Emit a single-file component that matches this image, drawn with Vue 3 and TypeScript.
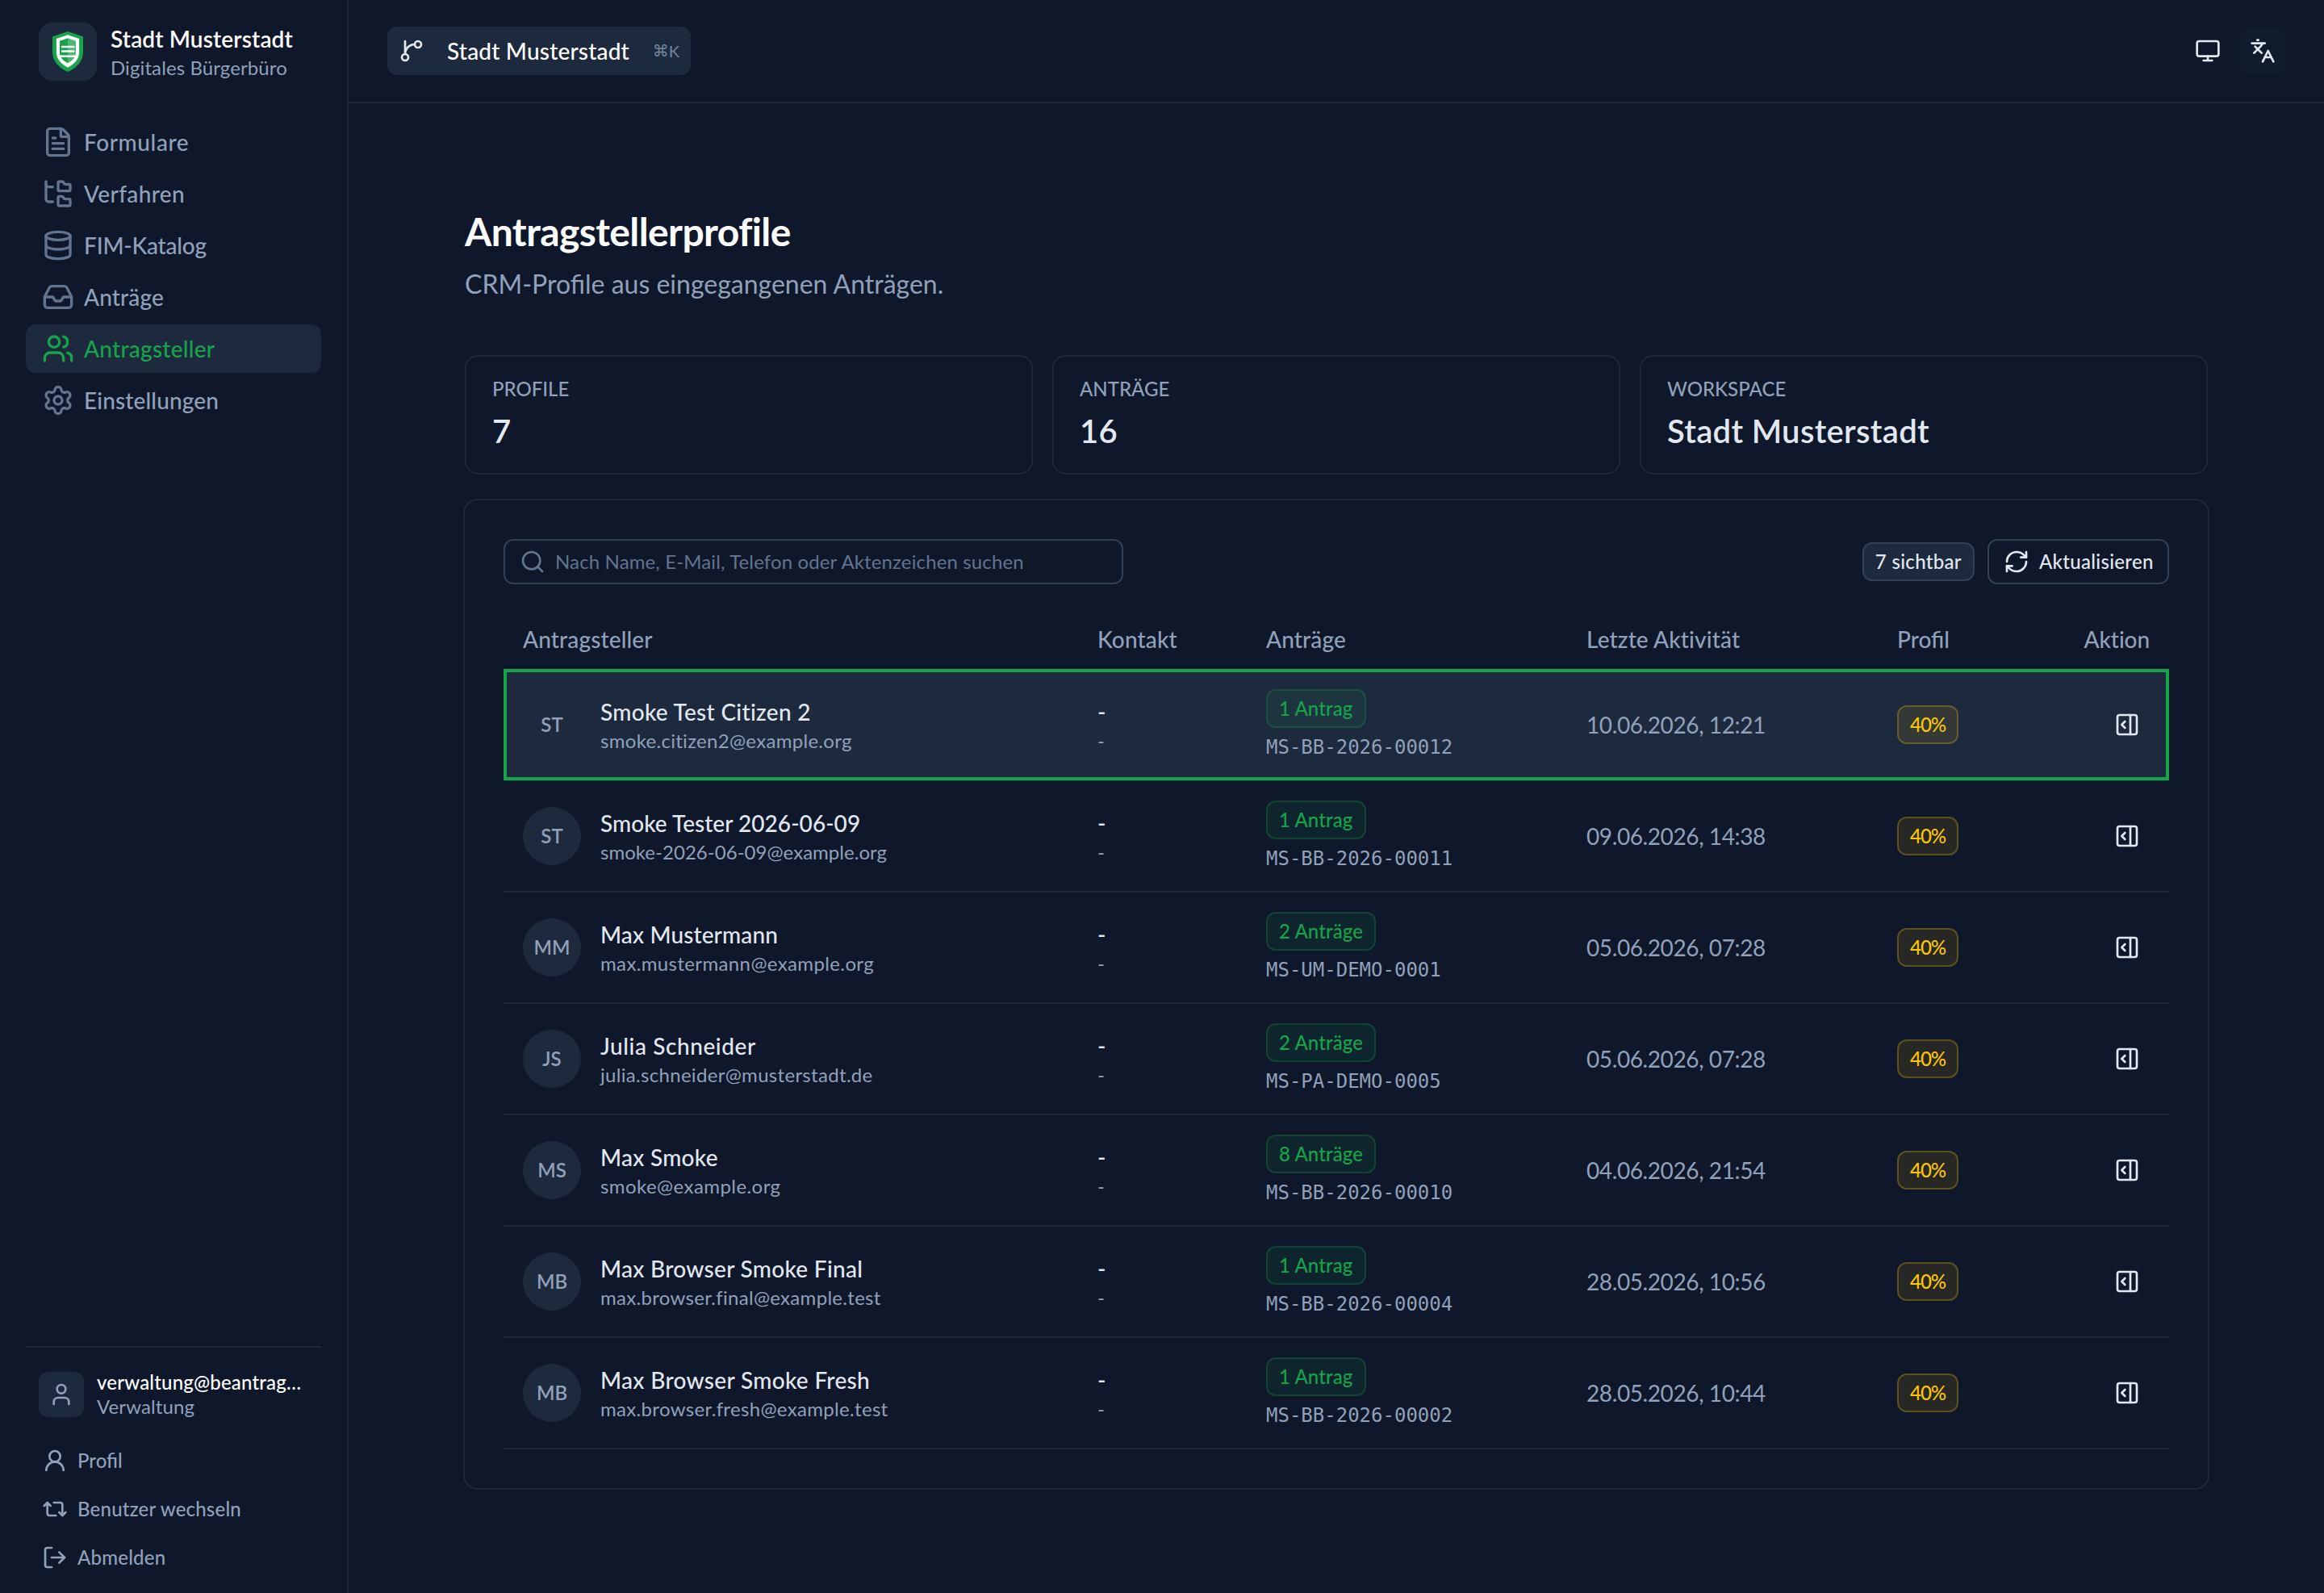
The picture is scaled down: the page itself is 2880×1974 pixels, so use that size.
<script setup lang="ts">
interface NavItem {
  label: string
  icon: string
  tracking: number
  active?: boolean
}

interface Applicant {
  initials: string
  name: string
  nameTracking: number
  email: string
  emailTracking: number
  requests: string
  reference: string
  lastActivity: string
}

/* Stroke icons on a 24 × 24 grid */
const icons: Record<string, string> = {
  file: '<path d="M6 22a2 2 0 0 1-2-2V4a2 2 0 0 1 2-2h8a2.4 2.4 0 0 1 1.704.706l3.588 3.588A2.4 2.4 0 0 1 20 8v12a2 2 0 0 1-2 2z"/><path d="M14 2v5a1 1 0 0 0 1 1h5"/><path d="M10 9H8"/><path d="M16 13H8"/><path d="M16 17H8"/>',
  folders:
    '<path d="M20 10a1 1 0 0 0 1-1V6a1 1 0 0 0-1-1h-2.5a1 1 0 0 1-.8-.4l-.9-1.2A1 1 0 0 0 15 3h-2a1 1 0 0 0-1 1v5a1 1 0 0 0 1 1Z"/><path d="M20 21a1 1 0 0 0 1-1v-3a1 1 0 0 0-1-1h-2.9a1 1 0 0 1-.88-.55l-.42-.85a1 1 0 0 0-.92-.6H13a1 1 0 0 0-1 1v5a1 1 0 0 0 1 1Z"/><path d="M3 5a2 2 0 0 0 2 2h3"/><path d="M3 3v13a2 2 0 0 0 2 2h3"/>',
  database:
    '<ellipse cx="12" cy="5" rx="9" ry="3"/><path d="M3 5V19A9 3 0 0 0 21 19V5"/><path d="M3 12A9 3 0 0 0 21 12"/>',
  inbox:
    '<path d="M22 12h-6l-2 3h-4l-2-3H2"/><path d="M5.45 5.11 2 12v6a2 2 0 0 0 2 2h16a2 2 0 0 0 2-2v-6l-3.45-6.89A2 2 0 0 0 16.76 4H7.24a2 2 0 0 0-1.79 1.11z"/>',
  users:
    '<path d="M16 21v-2a4 4 0 0 0-4-4H6a4 4 0 0 0-4 4v2"/><path d="M16 3.128a4 4 0 0 1 0 7.744"/><path d="M22 21v-2a4 4 0 0 0-3-3.87"/><circle cx="9" cy="7" r="4"/>',
  settings:
    '<path d="M9.671 4.136a2.34 2.34 0 0 1 4.659 0 2.34 2.34 0 0 0 3.319 1.915 2.34 2.34 0 0 1 2.33 4.033 2.34 2.34 0 0 0 0 3.831 2.34 2.34 0 0 1-2.33 4.033 2.34 2.34 0 0 0-3.319 1.915 2.34 2.34 0 0 1-4.659 0 2.34 2.34 0 0 0-3.32-1.915 2.34 2.34 0 0 1-2.33-4.033 2.34 2.34 0 0 0 0-3.831A2.34 2.34 0 0 1 6.35 6.051a2.34 2.34 0 0 0 3.319-1.915"/><circle cx="12" cy="12" r="3"/>',
  user: '<path d="M19 21v-2a4 4 0 0 0-4-4H9a4 4 0 0 0-4 4v2"/><circle cx="12" cy="7" r="4"/>',
  userRound: '<circle cx="12" cy="8" r="5"/><path d="M20 21a8 8 0 0 0-16 0"/>',
  repeat:
    '<path d="m2 9 3-3 3 3"/><path d="M13 18H7a2 2 0 0 1-2-2V6"/><path d="m22 15-3 3-3-3"/><path d="M11 6h6a2 2 0 0 1 2 2v10"/>',
  logout:
    '<path d="m16 17 5-5-5-5"/><path d="M21 12H9"/><path d="M9 21H5a2 2 0 0 1-2-2V5a2 2 0 0 1 2-2h4"/>',
  branch:
    '<path d="M15 6a9 9 0 0 0-9 9V3"/><circle cx="18" cy="6" r="3"/><circle cx="6" cy="18" r="3"/>',
  monitor: '<rect width="20" height="14" x="2" y="3" rx="2"/><path d="M8 21h8"/><path d="M12 17v4"/>',
  languages:
    '<path d="m5 8 6 6"/><path d="m4 14 6-6 2-3"/><path d="M2 5h12"/><path d="M7 2h1"/><path d="m22 22-5-10-5 10"/><path d="M14 18h6"/>',
  search: '<path d="m21 21-4.34-4.34"/><circle cx="11" cy="11" r="8"/>',
  refresh:
    '<path d="M3 12a9 9 0 0 1 9-9 9.75 9.75 0 0 1 6.74 2.74L21 8"/><path d="M21 3v5h-5"/><path d="M21 12a9 9 0 0 1-9 9 9.75 9.75 0 0 1-6.74-2.74L3 16"/><path d="M8 16H3v5"/>',
  panelOpen:
    '<rect width="18" height="18" x="3" y="3" rx="2"/><path d="M15 3v18"/><path d="m10 15-3-3 3-3"/>',
}

const navItems: NavItem[] = [
  { label: 'Formulare', icon: 'file', tracking: 0.6 },
  { label: 'Verfahren', icon: 'folders', tracking: 0.37 },
  { label: 'FIM-Katalog', icon: 'database', tracking: -0.2 },
  { label: 'Anträge', icon: 'inbox', tracking: 0.16 },
  { label: 'Antragsteller', icon: 'users', tracking: 0.27, active: true },
  { label: 'Einstellungen', icon: 'settings', tracking: 0.15 },
]

const accountLinks: NavItem[] = [
  { label: 'Profil', icon: 'userRound', tracking: 0 },
  { label: 'Benutzer wechseln', icon: 'repeat', tracking: 0.2 },
  { label: 'Abmelden', icon: 'logout', tracking: 0.2 },
]

const stats = [
  { label: 'PROFILE', value: '7' },
  { label: 'ANTRÄGE', value: '16' },
  { label: 'WORKSPACE', value: 'Stadt Musterstadt' },
]

const applicants: Applicant[] = [
  { initials: 'ST', name: 'Smoke Test Citizen 2', nameTracking: 0.3, email: 'smoke.citizen2@example.org', emailTracking: 0.3, requests: '1 Antrag', reference: 'MS-BB-2026-00012', lastActivity: '10.06.2026, 12:21' },
  { initials: 'ST', name: 'Smoke Tester 2026-06-09', nameTracking: 0.04, email: 'smoke-2026-06-09@example.org', emailTracking: 0.03, requests: '1 Antrag', reference: 'MS-BB-2026-00011', lastActivity: '09.06.2026, 14:38' },
  { initials: 'MM', name: 'Max Mustermann', nameTracking: 0.13, email: 'max.mustermann@example.org', emailTracking: 0.37, requests: '2 Anträge', reference: 'MS-UM-DEMO-0001', lastActivity: '05.06.2026, 07:28' },
  { initials: 'JS', name: 'Julia Schneider', nameTracking: 0.58, email: 'julia.schneider@musterstadt.de', emailTracking: 0.31, requests: '2 Anträge', reference: 'MS-PA-DEMO-0005', lastActivity: '05.06.2026, 07:28' },
  { initials: 'MS', name: 'Max Smoke', nameTracking: 0.27, email: 'smoke@example.org', emailTracking: 0.43, requests: '8 Anträge', reference: 'MS-BB-2026-00010', lastActivity: '04.06.2026, 21:54' },
  { initials: 'MB', name: 'Max Browser Smoke Final', nameTracking: 0.3, email: 'max.browser.final@example.test', emailTracking: 0.3, requests: '1 Antrag', reference: 'MS-BB-2026-00004', lastActivity: '28.05.2026, 10:56' },
  { initials: 'MB', name: 'Max Browser Smoke Fresh', nameTracking: 0.33, email: 'max.browser.fresh@example.test', emailTracking: 0.33, requests: '1 Antrag', reference: 'MS-BB-2026-00002', lastActivity: '28.05.2026, 10:44' },
]

/* A zero tracking keeps the font's ligatures switched on */
const track = (px: number) => ({ letterSpacing: px === 0 ? 'normal' : `${px}px` })
</script>

<template>
  <div class="app">
    <aside class="sidebar">
      <div class="brand">
        <div class="brand-mark">
          <svg width="72" height="72" viewBox="0 0 72 72">
            <path fill="#16a34a" d="M36 11 55 17.3V37C55 48 46.5 56.500 36 61 25.500 56.500 17 48 17 37V17.300Z" />
            <path fill="#4cb871" d="M36 15 50.800 19.800V37C50.800 46.500 44 53 36 56.500 28 53 21.200 46.500 21.200 37V19.800Z" opacity=".55" />
            <path fill="#fff" d="M36 15.200 50 20V37C50 45.500 43.500 51.500 36 55.500 28.500 51.500 22 45.500 22 37V20Z" />
            <path fill="#16a34a" d="M36 19.200 26 22.800V37C26 43 30 47 36 50.300Z" />
            <path fill="#4cb871" d="M36 19.200 46 22.800V37C46 43 42 47 36 50.300Z" />
            <path stroke="#fff" stroke-width="2.400" stroke-linecap="round" d="M29 30H43.500M29 35.500H43.500M27 41.800H45" />
          </svg>
        </div>
        <div class="brand-text">
          <span class="brand-name">Stadt Musterstadt</span>
          <span class="brand-sub">Digitales Bürgerbüro</span>
        </div>
      </div>

      <nav class="nav">
        <a v-for="item in navItems" :key="item.label" class="nav-item" :class="{ active: item.active }">
          <svg class="icon nav-icon" viewBox="0 0 24 24" v-html="icons[item.icon]" />
          <span :style="track(item.tracking)">{{ item.label }}</span>
        </a>
      </nav>

      <div class="account">
        <div class="account-user">
          <div class="account-avatar">
            <svg class="icon" viewBox="0 0 24 24" v-html="icons.user" />
          </div>
          <div class="account-text">
            <span class="account-mail">verwaltung@beantrag…</span>
            <span class="account-role">Verwaltung</span>
          </div>
        </div>
        <a v-for="link in accountLinks" :key="link.label" class="account-link">
          <svg class="icon" viewBox="0 0 24 24" v-html="icons[link.icon]" />
          <span class="raised" :style="track(link.tracking)">{{ link.label }}</span>
        </a>
      </div>
    </aside>

    <div class="content">
      <header class="topbar">
        <button class="workspace">
          <svg class="icon" viewBox="0 0 24 24" v-html="icons.branch" />
          <span class="workspace-name">Stadt Musterstadt</span>
          <span class="shortcut"><span class="cmd">⌘</span>K</span>
        </button>
        <div class="topbar-actions">
          <button class="icon-button"><svg class="icon" viewBox="0 0 24 24" v-html="icons.monitor" /></button>
          <button class="icon-button tinted"><svg class="icon" viewBox="0 0 24 24" v-html="icons.languages" /></button>
        </div>
      </header>

      <main class="page">
        <h1>Antragstellerprofile</h1>
        <p class="lead">CRM-Profile aus eingegangenen Anträgen.</p>

        <section class="stats">
          <div v-for="stat in stats" :key="stat.label" class="stat">
            <div class="stat-label">{{ stat.label }}</div>
            <div class="stat-value">{{ stat.value }}</div>
          </div>
        </section>

        <section class="panel">
          <div class="toolbar">
            <div class="search">
              <svg class="icon" viewBox="0 0 24 24" v-html="icons.search" />
              <span class="raised">Nach Name, E-Mail, Telefon oder Aktenzeichen suchen</span>
            </div>
            <div class="toolbar-right">
              <span class="badge neutral">7 sichtbar</span>
              <button class="refresh">
                <svg class="icon" viewBox="0 0 24 24" v-html="icons.refresh" />
                <span class="raised">Aktualisieren</span>
              </button>
            </div>
          </div>

          <div class="table">
            <div class="row head">
              <div class="cell">Antragsteller</div>
              <div class="cell">Kontakt</div>
              <div class="cell">Anträge</div>
              <div class="cell">Letzte Aktivität</div>
              <div class="cell ligatures">Profil</div>
              <div class="cell end">Aktion</div>
            </div>
            <div v-for="(person, index) in applicants" :key="person.reference" class="row body" :class="{ selected: index === 0 }">
              <div class="cell person">
                <div class="avatar">{{ person.initials }}</div>
                <div class="stack">
                  <span class="primary" :style="track(person.nameTracking)">{{ person.name }}</span>
                  <span class="secondary" :style="track(person.emailTracking)">{{ person.email }}</span>
                </div>
              </div>
              <div class="cell">
                <div class="stack">
                  <span class="primary">-</span>
                  <span class="secondary">-</span>
                </div>
              </div>
              <div class="cell">
                <div class="requests">
                  <span class="badge green">{{ person.requests }}</span>
                  <span class="code">{{ person.reference }}</span>
                </div>
              </div>
              <div class="cell date">{{ person.lastActivity }}</div>
              <div class="cell"><span class="badge yellow">40%</span></div>
              <div class="cell end">
                <button class="icon-button"><svg class="icon" viewBox="0 0 24 24" v-html="icons.panelOpen" /></button>
              </div>
            </div>
          </div>
        </section>
      </main>
    </div>
  </div>
</template>

<style>
body {
  background: #0f172b;
}
</style>

<style scoped>
.app {
  display: flex;
  width: 2880px;
  height: 1974px;
  overflow: hidden;
  background: #0f172b;
  color: #e2e8f0;
  font-family: Lato, 'Open Sans', sans-serif;
  font-size: 28px;
  font-weight: 500;
}

.app * {
  box-sizing: border-box;
}

button {
  border: 0;
  background: none;
  font: inherit;
  color: inherit;
  padding: 0;
}

.icon {
  width: 32px;
  height: 32px;
  flex: none;
  fill: none;
  stroke: currentColor;
  stroke-width: 2;
  stroke-linecap: round;
  stroke-linejoin: round;
}

/* Optical centring of small labels */
.raised {
  padding-bottom: 2px;
}

/* Sidebar */
.sidebar {
  width: 432px;
  flex: none;
  display: flex;
  flex-direction: column;
  padding: 28px 32px 14px;
  border-right: 2px solid #1d293d;
}

.brand {
  display: flex;
  gap: 17px;
  height: 72px;
  padding-left: 16px;
}

.brand-mark {
  width: 72px;
  height: 72px;
  flex: none;
  border-radius: 16px;
  background: #1d293d;
}

.brand-text,
.account-text {
  display: flex;
  flex-direction: column;
}

.brand-name {
  line-height: 40px;
  font-weight: 600;
  letter-spacing: 0.13px;
  color: #fff;
}

.brand-sub {
  line-height: 32px;
  font-size: 24px;
  font-weight: 400;
  letter-spacing: 0.1px;
  color: #90a1b9;
}

.nav {
  display: flex;
  flex-direction: column;
  gap: 4px;
  margin-top: 46px;
}

.nav-item {
  display: flex;
  align-items: center;
  gap: 12px;
  height: 60px;
  padding-left: 20px;
  border-radius: 12px;
  color: #90a1b9;
}

.nav-icon {
  width: 40px;
  height: 40px;
  color: #62748e;
}

.nav-item.active {
  background: #1d293d;
}

.nav-item.active,
.nav-item.active .nav-icon {
  color: #16a34a;
}

.account {
  margin-top: auto;
  border-top: 2px solid #1d293d;
  padding-top: 30px;
}

.account-user {
  display: flex;
  align-items: center;
  gap: 16px;
  height: 56px;
  margin-bottom: 24px;
  padding-left: 16px;
}

.account-avatar {
  display: flex;
  align-items: center;
  justify-content: center;
  width: 56px;
  height: 56px;
  border-radius: 12px;
  background: #1d293d;
  color: #90a1b9;
}

.account-text {
  font-size: 24px;
  line-height: 30px;
}

.account-mail {
  color: #fff;
  letter-spacing: 0.18px;
}

.account-role {
  font-weight: 400;
  letter-spacing: 0.1px;
  color: #90a1b9;
}

.account-link {
  display: flex;
  align-items: center;
  gap: 12px;
  height: 60px;
  padding-left: 20px;
  font-size: 24px;
  color: #90a1b9;
}

/* Top bar */
.content {
  flex: 1;
  min-width: 0;
}

.topbar {
  display: flex;
  align-items: center;
  justify-content: space-between;
  height: 128px;
  padding: 0 48px;
  border-bottom: 2px solid #1d293d;
}

.workspace {
  display: flex;
  align-items: center;
  width: 376px;
  height: 60px;
  padding: 0 14px;
  border-radius: 12px;
  background: #1d293d;
}

.workspace-name {
  margin-left: 28px;
  letter-spacing: 0.2px;
  color: #fff;
}

.shortcut {
  display: flex;
  align-items: center;
  margin-left: auto;
  font-size: 20px;
  line-height: 24px;
  font-weight: 400;
  color: #7485a1;
}

.cmd {
  font-family: 'DejaVu Sans', sans-serif;
  font-size: 20px;
  line-height: 24px;
}

.topbar-actions {
  display: flex;
  gap: 12px;
}

.icon-button {
  display: flex;
  align-items: center;
  justify-content: center;
  width: 56px;
  height: 56px;
  border-radius: 12px;
}

.tinted {
  background: #101b2e;
}

/* Page */
.page {
  width: 2160px;
  margin: 0 auto;
  padding-top: 131px;
}

h1 {
  margin: 0;
  font-size: 48px;
  line-height: 56px;
  font-weight: 700;
  letter-spacing: -0.58px;
  color: #fff;
}

.lead {
  margin: 17px 0 0;
  font-size: 32px;
  line-height: 40px;
  font-weight: 400;
  color: #90a1b9;
}

.stats {
  display: grid;
  grid-template-columns: repeat(3, 1fr);
  gap: 24px;
  margin-top: 68px;
}

.stat {
  height: 148px;
  padding: 24px 32px 0;
  border: 2px solid #1d293d;
  border-radius: 16px;
}

.stat-label {
  font-size: 24px;
  line-height: 32px;
  color: #90a1b9;
}

.stat-value {
  margin-top: 8px;
  font-size: 40px;
  line-height: 56px;
  font-weight: 600;
  letter-spacing: 0.32px;
}

.panel {
  margin-top: 32px;
  padding: 48px;
  border-radius: 16px;
  box-shadow: 0 0 0 2px #1d293d;
}

.toolbar,
.toolbar-right {
  display: flex;
  align-items: center;
  justify-content: space-between;
}

.toolbar-right {
  gap: 16px;
}

.search {
  display: flex;
  align-items: center;
  gap: 12px;
  width: 768px;
  height: 56px;
  padding-left: 18px;
  border: 2px solid #314158;
  border-radius: 12px;
  font-size: 24px;
  font-weight: 400;
  letter-spacing: 0.13px;
  color: #62748e;
}

.refresh {
  display: flex;
  align-items: center;
  gap: 12px;
  width: 225px;
  height: 56px;
  padding-left: 18px;
  border: 2px solid #314158;
  border-radius: 12px;
  font-size: 24px;
  letter-spacing: 0.3px;
}

.badge {
  display: inline-flex;
  align-items: center;
  height: 48px;
  padding: 0 14px 2px;
  border: 2px solid;
  border-radius: 12px;
  font-size: 24px;
  white-space: nowrap;
}

.badge.neutral {
  background: #1d293d;
  border-color: #314158;
  letter-spacing: 0.32px;
}

.badge.green {
  color: #16a34a;
  background: rgba(22, 163, 74, 0.1);
  border-color: rgba(22, 163, 74, 0.25);
  letter-spacing: 0.12px;
}

.badge.yellow {
  color: #fdc700;
  background: rgba(253, 199, 0, 0.1);
  border-color: rgba(253, 199, 0, 0.25);
  letter-spacing: -1px;
}

.table {
  margin-top: 32px;
}

.row {
  position: relative;
  display: grid;
  grid-template-columns: 712px 209px 397px 385px 174px 1fr;
  border-bottom: 2px solid #1d293d;
}

.cell {
  display: flex;
  align-items: center;
  padding: 0 24px;
  white-space: nowrap;
}

.end {
  justify-content: flex-end;
}

.head {
  height: 74px;
  color: #90a1b9;
  letter-spacing: 0.15px;
}

.head .end {
  letter-spacing: -0.1px;
}

.head .ligatures {
  letter-spacing: normal;
}

.body {
  height: 138px;
}

.selected {
  background: #1d293d;
}

.selected::after {
  content: '';
  position: absolute;
  inset: -1px 0;
  border: 4px solid #16a34a;
}

.person {
  gap: 24px;
}

.avatar {
  display: flex;
  align-items: center;
  justify-content: center;
  width: 72px;
  height: 72px;
  padding-bottom: 2px;
  flex: none;
  border-radius: 50%;
  background: #1d293d;
  font-size: 24px;
  font-weight: 600;
  color: #90a1b9;
}

.stack {
  display: flex;
  flex-direction: column;
  padding-top: 3px;
  line-height: 36px;
}

.primary {
  line-height: 37px;
}

.secondary {
  line-height: 34px;
  font-size: 24px;
  font-weight: 400;
  color: #90a1b9;
}

.requests {
  display: flex;
  flex-direction: column;
  align-items: flex-start;
  gap: 6px;
}

.code {
  height: 34px;
  padding-top: 1px;
  font-family: 'DejaVu Sans Mono', monospace;
  font-size: 24px;
  line-height: 34px;
  font-weight: 400;
  color: #90a1b9;
}

.date {
  font-weight: 400;
  letter-spacing: -0.4px;
  color: #90a1b9;
}
</style>
